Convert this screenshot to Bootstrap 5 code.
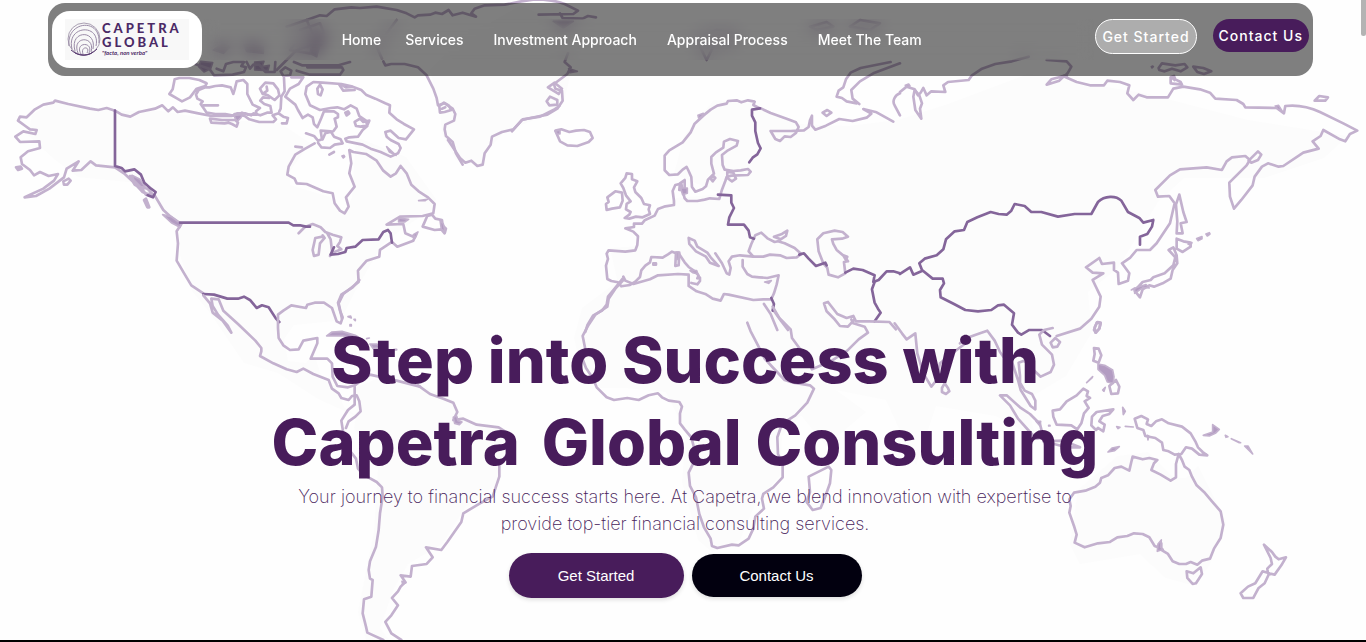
<!DOCTYPE html>
<html lang="en">
<head>
<meta charset="utf-8">
<meta name="viewport" content="width=device-width, initial-scale=1">
<title>Capetra Global Consulting</title>
<link href="https://cdn.jsdelivr.net/npm/bootstrap@5.3.0/dist/css/bootstrap.min.css" rel="stylesheet">
<style>
  :root { --brand: #481c5b; --ink: #02000f; }
  body { font-family: Inter, "Liberation Sans", sans-serif; background: #fefefe; }
  .hero { min-height: 100vh; border-bottom: 2px solid #000; overflow: hidden; }
  .world { z-index: 0; }
  .world g { fill: none; stroke: #c3b1ce; stroke-width: 8; stroke-linejoin: round; stroke-linecap: round; }
  .world .land { fill: #fcfcfc; stroke: none; }
  .world .edge { fill: none; stroke: #84659a; stroke-width: 8; }
  .world .blob { fill: #b39cc2; stroke-width: 5; }
  .topbar { z-index: 2; margin: 3px 53px 0 48px; padding: 8px 4px; background: rgba(0,0,0,.5); border-radius: 17px; }
  .brand-pill { width: 150px; height: 57px; border-radius: 18px; }
  .menu { height: 41px; padding-right: 34px; backdrop-filter: blur(8px); }
  .menu a { color: #fff; font-size: 14px; font-weight: 500; line-height: 20px; text-decoration: none; white-space: nowrap; }
  .menu .spaced { margin-left: 30px; }
  .pill { border-radius: 24px; color: #fff; font-size: 14px; font-weight: 500; line-height: 21px; letter-spacing: 1px; padding: 6px; white-space: nowrap; }
  .pill-ghost { background: #adadad; border: 1px solid #fff; }
  .pill-solid { background: var(--brand); border: 0; }
  .lede-wrap { z-index: 1; padding: 243px 12px 0 16px; }
  .headline { color: var(--brand); font-size: 63px; font-weight: 800; line-height: 82px; margin: 0; }
  .tagline { color: var(--brand); font-size: 18px; font-weight: 200; line-height: 27px; margin: 0 0 16px; max-width: 800px; }
  .cta { font-family: "Liberation Sans", Arial, sans-serif; font-size: 15px; line-height: 24px; color: #fff; border: 0; border-radius: 24px; box-shadow: 0 2px 4px rgba(0,0,0,.12); }
  .cta-main { background: var(--brand); width: 175px; height: 45px; }
  .cta-dark { background: var(--ink); width: 170px; height: 43px; }
  .thumb { z-index: 3; top: 0; right: 0; width: 5px; height: 36px; background: #b3b3b3; border-radius: 0 0 3px 3px; }
</style>
</head>
<body>
<div class="hero position-relative d-flex flex-column">

<svg class="world position-absolute top-0 start-0 w-100 h-100" viewBox="0 0 1366 642" preserveAspectRatio="xMidYMin slice" aria-hidden="true">
  <!-- Land masses -->
  <path class="land" d="M55 101l60 10 45 0 50 8 70 4 30 20-20 28 0 14 40 12 14 18 8-18 4-60 50 20 30 42-4 10-30 20-20 16-14 24-16 28-10 20-8 4-40 4-10 14 4 22 18 2 8-10 8 26 14 8 8 20 14 10-40-18-40-26-34-10-34-50-18-22-12-36 0-28-22-20-20-24-60-6-24-18-26-24 4-20z"/>
  <path class="land" d="M430 70l30-30 60-34 50 20 0 50-6 26-30 18-30 12-16 18-8 16-24-6-14-26-2-24z"/>
  <path class="land" d="M355 388l38-16 60 28 10 18 45 14-8 50-34 24-24 38-34 20-14 24-14 40 18 24h-28l-12-40 16-80 4-64-24-40 4-24z"/>
  <path class="land" d="M622 278l60-4 30 22 50 6 20 40 28 26 26 10-30 32-24 26-2 40-24 26-16 38-28 12-14-12-16-58 4-50-20-40-40-4-26 0-20-24-6-26 8-30z"/>
  <path class="land" d="M610 248l30-2 0-20 36-28 46-4-48-20 10-38 30-36 40 4 44 20 50 2 50-6 50-16 80-30 120 20 100 26 100 16-24 22-60 20-80 0-26 24-40 66-30 24 4 40-26 44-40 24 10 38-40-22-60-10-20 60-30-66-50-10 30 22-40 34-44-54-30-26-60-20-60 0z"/>
  <path class="land" d="M1078 490l40-34 30-4 26 26 12 0 12-12 28 56-18 46-20 16-22-6-26-24-60 10-10-20z"/>
  <!-- North America -->
  <g transform="translate(0 70) scale(.3333)">
    <path d="M345 122L320 114 295 120 270 116 205 102 165 92 160 98 130 104 105 118 80 142 60 140 54 152 76 168 90 178 110 180 106 192 70 184 46 200 60 216 118 214 120 234 84 244 62 262 66 282 90 300 102 316 120 306 146 318 174 312 162 332 130 356 74 382 108 378 148 356 192 322 200 296 236 274 218 302 244 300 272 274 288 286 345 292 372 310 400 336 428 366 448 374 464 376 490 420 512 440 544 462 530 484 534 520 530 572 556 616 574 646 610 670"/>
    <path d="M48 292l14-2 4 6-12 4zM190 334l16-8 6 6-10 12-10 0zM432 390l6-4 10 26-6 0zM390 318l12 4 12 26-10-4zM422 350l20 6 14 14-18 4z"/>
    <path class="blob" d="M396 316l24 12 16 24-14-2-20-20zM488 434l26 6 30 22-4 10-26-14z"/>
    <path d="M345 122l20 12 26 6 26-14 48-10 22-10 18 18 14-12 14 14 22-4 40 8 40 8 40 0 20 0 16-8 24 0 18 6 8-6 20 6 20-8 14 0-4-20-18-6-12-10 8-10 18 2"/>
    <path d="M630 146l4 12 40 2 12-2 10 4 14 8 4-12-8-8-40 0zM704 132l30 6 14 10 30 8 42 0 8-8-10-12 18-6 14 10 14 4-4 16-14 0"/>
    <path d="M944 220L912 238 886 254 866 290 862 314 884 326 890 340 920 342 970 364 998 370 1004 400 1020 422 1034 430 1046 410 1038 382 1064 350 1048 310 1054 280 1048 240 1060 246 1098 252 1130 272 1150 302 1172 320 1188 310 1202 288 1220 310 1234 344 1256 364 1284 382 1304 402 1300 430 1268 438 1200 440 1160 464 1210 462 1216 490 1240 500 1248 494 1240 512 1192 530 1176 516 1140 540 1138 560 1100 572 1074 602 1076 636 1030 672 1016 700 1026 746"/>
    <path d="M1282 438l-14 32 36 10 20-2 10 12 4-14-10-10-2-16-20-4-10-12z"/>
    <path class="blob" d="M1196 444l30 4-12 8-18 0zM1240 494l14-8-8 18zM1256 392l26-4-6 4z"/>
    <path d="M896 490l18-18 24-10 24 10 14 14 22 8 26 8-4 14-8 12 12 10-26 10-8 10M968 500l-22 4-8 36 4 18 14-4 4-34 14-16-6-8zM982 490l10 18 4 34"/>
    <path class="edge" d="M345 122v166l20 6 10 10 28-6 20 16 10 24 20 18 14 10-8 16-16-6M540 458h326l14 8 20 0 18 4 12 0M1002 532l-10 22 22-2 22-6 4-12 26-4 22-20 48-2 14-22 14-6 8 10 4 28M610 672l32 2 40 12 32 0 18-6 18 10 20 24 16-8 20 6 22 34 10 10"/>
  </g>
  <!-- Arctic islands -->
  <g transform="translate(150 50) scale(.3333)">
    <path d="M74 88l-6 30-10 14 24 14 14 8 24-12 20-26 26-8 4-8-22-10-30-6-30 0zM166 112l-20 8-8 14 4 12 16 8-6 8 10 14 8 12 26 4 30 0 30 6 20-10 18 6 26 0-2-10 12-10-22-10-16-32 0-30-12-12-20 4-6 24-4 14-8-20-26-6-20 2-18 4zM160 166h44M330 116l16-18 24 2 14 18 4 18-14 14-20-14-16-4zM350 110l2 12-12 8 10 4M402 84l2 40-10 16-2 36-4 8M424 82h36l-14 20-26 14-14 24 30 24 8 16 14 24 16-10 14 8 4 20 10 10 12-28 8-20 30 0 12 8 0 10-10 4 6 24-10 14-24 6-8 18"/>
    <path d="M510 180l-30-14-14-34 4-22 20-14 28 2 56 4 34 8 26 10 14 14 28 12 30 14 14 6-2 22 22 20 22 14 30 16-24 30-22-4-24-22-16 4 4 14 12 10 24 12 6 12-8 16-22 10-30-14-30-10-24-12-48-10-4-8 12-4 26-2 14-20 14-12-4-16-20-14-8-22-18-10-20 12-20-6-20 2zM614 216l16-10 10 10 18-4-6 14-20 4-14-2zM502 116l8-12 8 14-6 18-8-4zM586 188l8-4 4 6-8 6z"/>
    <path d="M468 250l24 8 12 14 12-4-4-26 30 2 10 16 20 8 6 12-24 4-14 10-26-2-10-14M436 290l20 2M538 314l14-8M568 104l12 18 34-2"/>
    <path class="blob" d="M568 102l40 10-20 2zM576 318l6-2 2 4-4 4zM710 290l28 26-20-10zM252 196l26-2-6 10-10 10-6-8zM152 34l36 4-6 18-20 10-16-16zM314 36l28-2-6 16 22-4-4 16-40-2z"/>
    <path d="M128 40l50 16 14 20 56-2 34-8 6-14-14-4 8-12-32 0-22 6-8 22-20-8M290 36l10 20 10-12 18 0 18 22 28 0 2-30M392 64l14-12 18 10-4 14-20 2zM432 36l24 10 110 0 34-10M440 62l40 12 90 0 10-14-4-8-104 0M700 34l6 12 18-4 40 0 40 10 26 24 20 40 10 28 4 22 20-6 24 16 8 16-4 20-26 12-2 14 4 20 20 18 10 34 20 34"/>
    <path d="M868 168l14-10 14 8 8 14-20 6-14 2zM876 176l10-4"/>
  </g>
  <!-- Far north behind the bar -->
  <g transform="translate(200 0) scale(.3333)">
    <path d="M320 60l40-14 20 2 24-20 50-6 26 2 50-4 60 10 30 10 24 12 10-6 36-2 16-6 20 4 20-12 12 16 30-8 40 12-14-10 10-14 30-10 60-2 50-10 40-6c40 0 70 6 90 14l40 20-14 10-104 2M1080 40l8 14 60 2 16-8 24 4M1104 160l-10 26 18 16-10 20-40 30 4 14 20 6 2 30-16 24-30 18-50 10-26 6-30 34"/>
    <path d="M590 60l-30 40-30 40 16 36M260 80l60-20 30 70-60 20-60 60M300 90l60-20 20 50-50 40-60-10 30-40M1044 262l20-14 22 18-10 16zM1040 304l10-14 22 10 0 14-24 2z"/>
    <path class="blob" d="M40 150l30-20 20 10-20 20zM130 130l60 10 0 20-50-6zM340 110l30-10-20 70-20-10zM1060 64l60 0-30 20zM1106 206l26 8-22 4z"/>
  </g>
  <!-- Greenland south, Iceland, Europe -->
  <g transform="translate(440 0) scale(.3333)">
    <path d="M24 420L40 444 60 474 76 488 94 482 112 498 128 494 134 460 152 434 156 410 186 396 220 388 248 358 300 350 340 330 358 318"/>
    <path d="M346 392l18-4 24 8 20-4 24-2 18 6 8 18-12 12-34 12-30-2-22-12z"/>
    <path class="blob" d="M346 394l14-4 0 12-8 0zM0 660l10 12 6 24-12-8zM774 346l16-6-4 10-10 4z"/>
    <path d="M560 520l16 2 0 16 16 6-10 18 4 14 18 18 8 18 18 4-4 12 4 14-22 10-20-2-20 6-14-2 14-10 4-8-14-8 2-16 12-8-14-18-8-22-8-14 14-16zM526 574l20 4 2 24-8 20-24 4-16 4-2-18 8-6-4-14z"/>
    <path d="M960 325l-20-10 4-10-20-4-20 6-14-6-26 2-4 8-28 6-20 12-22 18-26 24-12 26-24 30-40 24-14 16 0 44 14 14 26-2 14-14 12-8 6 12 8 18 2 30 10 14 22-8 10-8 6-20 18-18-8-30 0-20 14-14 22-14 2-18 18-8 24 6-4 14-26 14-18 14 2 30 6 14 26 4 22-2 22-4 8 8-8 10-50 2-14 4-4 12-10 26-8 28-28-2-16 4-22 4-30 0-8-8-6-24-4-20-18 4-8 18 4 30 0 12-26 4-22 8-10 20-30 14-8 10-24 0 0 10-26 4 24 10 14 14-2 26-6 16-30 4-50-4-6 10 4 16-6 20 4 40 12 6 20 4 10 12 26-4 16-10 14-14 4-20 12-14 14-10 4-16 34 2 16-10 12-8 22 8 16 24 12 14 20 14 10 12-4 8 8-2 0 10-8 10-18-4"/>
    <path d="M812 536l8-8 6 6-8 10zM862 516l18 2 8 18-12 8-14-10zM640 790h8v4h-8zM708 758h10l-2 38-10 2zM720 550l14-10 0 30-16 0z"/>
    <path class="blob" d="M710 756h6v22h-6zM722 564l20 0 0 16-14 4zM750 812l20 0 4 10-16-4zM974 846l20-4-8 8z"/>
    <path d="M834 796l-22-24-10-14-30-18-8-18-18-8 2 18 20 22 30 16 12 18 26 10M826 760l20 30 14 30 8 4 4-20-6-20 10-14 24-4 40 4M908 780l0 20 14 22 14 8 22 2 24 2 34-8-6 28-8 26-8 18-24 0-30 2-74-16-14-2-10 20-24-6-22-14-26-8-24-16 0-34-32-2-60 4-24 12-50 14-24-10-6-12"/>
    <path d="M940 770l30 0 20-6 30 2 20 8 30-2 14-10-20-18-30-14-20-6-10 2-20-10-20-18-18 8-12 26-8 22zM1002 710l24-8 16-10-4 16-16 10zM1150 790l-14-36-4-36 18-18 34-8 24 4 16 14-18 6-30 2 4 14 10 18 24 20 10 14-12 2 4 34-22 12-28-8-4-20zM1210 766l12 4-4 10z"/>
    <path d="M548 836l-24 30-20 24-4 24-14 18-26 14-18 30-6 20M972 912l20 30 20 48M1000 930l24 34 20 26"/>
    <path d="M962 325l30 14 50 18 26 10 8 14-8 18-16 12-18-2-14 14-14-6-14-24 60 0 40-2 14-10 4-20 6-14 0 30 10 12 32-12 40-20 40 6 42-10 14-12-24-14 40 10 50 28M1148 338l14-8 12 8-14 10zM1250 310l-30-6-14-10-16-4 6-18 14-10 8-24 14-20 30-14 90-18M1380 190l-80 30-40 24-26 26 4 26 20 16M1380 280c-16 6-24 24-16 36l16 30"/>
    <path d="M1110 80l50-14 20 14-50 10zM1230 80l30-20 60 10-30 20zM770 110l60-20 60 10-20 40-40-20-30 60-20-40z"/>
    <path class="edge" d="M960 325l-24 4 0 18 10 20 0 26 8 36 8 16-10 18-14 10-10 14M834 584l40 2 0 22 8 16-14 28-4 22 48 0 14 18 4 20 12 4M1078 764l14-4 14 16 22 22 28-10 4 8M1216 818l24-12 28 4 36 16-4 20 16-6 24-26 20 0 20 6M1304 846l-8 22 8 40 10 18 8 12-18 26"/>
    <path class="edge" d="M994 894l8 18-4 20"/>
    <path d="M1244 958l-20 22-24-2-16-20-24-24-8-24 12-4 28 36 28 12 20-6 8 16 40 0 60 2 20 22"/>
  </g>
  <!-- Russia, China, Japan -->
  <g transform="translate(900 60) scale(.3333)">
    <path d="M0 96l20-16 24 8 10 18 8-8 8-14 10 22 14-12 42 2-6-20 14-10 62-6 10-14 30-20 40-14 50-8 50-14M440 0L500 4 514 20 504 38 494 50 530 66 570 76 612 76 622 62 660 66 688 76 682 100 700 120 716 104 740 112 804 112 820 86 850 80 900 88 930 98 946 116 1010 120 1030 132 1036 142 1130 144 1152 160 1156 138C1190 134 1230 142 1260 156L1330 190 1372 212 1350 222 1336 244 1320 238 1270 210 1262 228 1238 244 1256 266 1210 278 1150 318 1136 320 1104 310 1086 320 1064 350 1058 376 1024 420 1002 446 990 410 988 368 1040 316 1050 300 1036 288 996 292 980 304 966 330 920 322 840 328 810 346 766 390 774 410 808 408 824 430 810 490 770 550 750 570 710 570 690 594 666 610 688 640 684 662 656 672 654 638 642 630 642 608 606 612 598 594 558 622 578 638 610 640 578 660 602 710 598 740 574 776 540 806 470 828"/>
    <path d="M1046 302l28-28 10 10-10 16-20 8zM1244 122l14-14 26 4-8 10zM44 90l-4 20 6 40 18 26-4-30 6-16-8-24zM440 74l14-16 38-10-14 14zM812 52l10-4 4 10 16 8 4 8-34-4zM776 24l10-14 40 6 28-4 8 10-20 12-26-8-22 8-16-4zM880 20l30 4 24 10-22 8-20-6z"/>
    <path class="blob" d="M754 20l4-2 2 2-4 4zM1126 138l10-2 10 16-12-4zM16 76l10-4 4 6-12 2zM484 48l18-6 0 8-14 2zM812 52l10 0 2 10zM890 536l16-6 0 6-12 6zM918 522l10-4 2 4-8 6zM864 552l12-4-4 8z"/>
    <path d="M838 404l-10 30 4 50-2 36 18 0-6-30 18-4-10-30zM830 536l20 8 22 4 0 12-24 16-18-10zM806 570l14-8 10 24 2 24-14 20-6 26-24 14-26 10-14-4-20 12-8 24-16-20 24-26 24-6 8-8 34-12 26-24 6-24zM584 802l8-16 10 2-4 18-12 12z"/>
    <path class="blob" d="M694 690l10-6 0 16 26-18 18 2-10-10-26 8z"/>
    <path class="edge" d="M0 642l30-20 10 22 24-10M66 630l-8-20 16-14 36-10 20-18 8-30 26-24 28-4 10-24 30-14 40-16 24 6 24 2 14-12 10-20 30 6 20 18 30 0 50 14 50-8 50 0 20-36c20-20 54-20 70-4l20 34 34 18 12 14 30-8-4 20-14 22-22 8 0 24M66 630l32 26 30 0 4 14-12 20 2 22 40 20 34 18 38 4 40-4 20-14 18-2 30 26-6 34 18 24 10 6 24-14 38 0 24 18"/>
  </g>
  <!-- Central America -->
  <g transform="translate(190 280) scale(.3333)">
    <path d="M508 0L488 22 454 44 444 68 450 92 458 112 452 130 440 124 426 84 402 68 374 68 352 74 348 84 304 76 280 92 264 104 264 144 266 174 280 196 300 210 326 208 340 182 382 174 382 190 362 236 412 236 426 250 428 290 442 318 474 322 494 316 540 284 620 302 690 320"/>
    <path d="M40 46l20 24 8 28 30 24 26 36-10-20-30-34-16-26-4-22 22 2 14 34 44 40 52 50 18 22 0 10-4 14 40 22 40 18 30 8 20-10 30 16 46 18 10 26 20 14 8 14 22 6 10-12 14-2 8 18 4 30-16 16-20 14-8 20"/>
    <path class="blob" d="M410 168l16-12 30-2 40 12 26 16-36-4-26-10zM474 110l8-2 2 6zM492 118h4v4zM480 134h4v4h-4zM540 192l20 0 14 10-24 4zM612 208h8v2h-8zM530 176l8-2z"/>
  </g>
  <!-- South America -->
  <g transform="translate(330 370) scale(.3333)">
    <path d="M74 50L74 104 54 120 34 152 40 190 30 200 50 230 78 266 84 296 100 314 140 336 156 352 158 380 150 430 146 480 138 530 120 574 116 600 120 626 128 630 124 680 102 688 98 730 108 770 112 788 160 810M214 810L184 790 166 756 184 736 204 706 186 684 204 664 212 650 226 636 212 616 242 620 246 588 290 582 308 562 288 532 334 540 352 516 394 456 400 430 450 400 488 380 508 320 508 284 544 236 550 200 506 172 440 164 400 146 370 150 382 126 370 98 340 86 300 72 264 46"/>
    <path class="blob" d="M370 142l10-4 4 14 12 4-8 8-14-4zM216 634l12 4-10 4z"/>
  </g>
  <!-- Africa, Arabia and India -->
  <g transform="translate(560 240) scale(.3333)">
    <path d="M190 120l-24 26-20 30-4 24-36 24-20 30-18 34 8 40-8 30 10 26 20 30 12 28 30 30 22 8 40-6 34 6 30-14 28-6 12 12 20 10 32 4 8 14-6 20 0 30 14 18 20 24 8 30 6 32-22 44 4 40 18 34 10 50 14 40 20 34 4 22 16 6 44-10 20 2 30-20 14-30 6-36 26-24-6-30 4-14 30-20 28-30 0-40-14-30-2-50 14-40 40-26 36-38 20-42-12-10-50-8-26-8-34-36-26-28-20-40-22-42-10-26"/>
    <path d="M638 200l20 34 34 34 4 26 44 60 16 34 56-24 50-32 34-34 28-20-10-18-34-10-6-12M1004 250L1026 280 1040 298 1066 280 1072 340 1090 400 1114 440 1130 420 1140 370 1190 330 1230 300"/>
    <path d="M1146 444l8-14 10 14 4 10-10 8-12-6zM746 710l60-30 8 10-4 40-18 50-10 24-24 6-18-24 10-30-2-24z"/>
  </g>
  <!-- South-east Asia and Oceania -->
  <g transform="translate(960 300) scale(.3333)">
    <path d="M0 130l20-16 40-14 22-8 22 30 16 34 10 14 24 10 20 60 8 30 30 48 14 10 0-26-10-20-22-10-14-24 0-20-4-40 16-6 20 20 30 28 30-14 10-22-6-30-30-30-8-30 14-14 26-6M272 128l14-14 14 12-8 14-14 2zM402 90l8-22 12 2-4 16-10 12z"/>
    <path d="M120 286l20 0 40 36 30 20 30 30 10 40-20 4-20-20-36-40-24-40zM278 332l22-4 20-24 30-18 20-20 14 8-4 14 10 6-16 10 12 20-14 16-8 30-12 18-18-12-44-2-10-24zM250 424l60-2 50 20-40 0zM402 144l14 2 8 20-8 22-16-6 4-20zM448 258l20-18 10 20-4 20-20 2z"/>
    <path class="blob" d="M414 192l20 4 24 14 4 20-2 20-18-4-8-20-20-18zM380 248l18-18-2 4zM428 270l8-8-4 12zM488 322l8 12-6 10zM470 380l10 2-6 4zM496 379l24 2zM562 406l4 2-2 12zM444 456l12-12 22-4-14 12zM796 406l8 4-6 2zM814 416l28 12-4 0zM854 438l10 0 14 24-22-22zM758 374l20 14-12 12-18 8-18-2 28-10zM228 364l14 0-2 14zM266 376h4v2h-4z"/>
    <path d="M396 350l14-14 50-8-12 14-20 6-10 16 16 10-4 20-16-10-6 6-14-14zM524 356l20-8 20 10-4 14 14 6 14-14 18-6 20 12 40 10 26 20 14 24 8 18 14 14 14 10-24-2-22-18-18-4-14 20-20 2-18-10-16-4-4-22-20-14-30-6-6-18-18-6z"/>
    <path d="M656 462l-8 30 0 40-16 10-30-18-28-14 8-20 10-10-24-6-20 4-30-8-4 16-6 26-24-12-20 4-20 22-20 8-4 14-14 12-30 12-34 6-14 20 4 20-4 20 14 40 8 26-6 24 30 14 40-12 36-4 22-14 30-4 20-8 26 2 20 10 16 26 10 4 10-12 0 20 20 12 14 22 20 8 20 0 14-6 20 8 14-12 24-6 12-30 20-32 8-40-8-40-26-30-24-28-22-20-14-26-8-20-14-10-8-20zM680 814l20 6 22-18 4 20-18 28-10 2-16-18z"/>
    <path class="blob" d="M594 732l10-12-2 22 8 6-18 6z"/>
    <path d="M912 734l24 22 10 14 10 8 22-6-14 24-20 28-20-4-2-14 14-14-4-18zM908 814l20 6-14 30-18 14-16 30-30 0-8-14 22-20 22-10z"/>
  </g>
</svg>

<header class="topbar navbar navbar-expand flex-nowrap position-relative">
  <a class="brand-pill bg-white d-flex align-items-center justify-content-center flex-shrink-0" href="#" aria-label="Capetra Global home">
    <svg width="124" height="41" viewBox="0 0 124 41">
      <rect width="124" height="41" fill="#f8f8f8"/>
      <g fill="none" stroke="#9a8ba7" stroke-width="1">
        <circle cx="19" cy="20" r="16" stroke="#aaa0b3"/>
        <path d="M4 27c-3-25 32-29 30-3M7 30C1 6 36 4 31 27M10 32C4 11 32 10 28 30M13 34c-7-17 18-18 13-1M16 35c-7-12 13-13 8-1M18 35c-3-8 8-8 4-1"/>
        <path d="M6 31c8 7 18 7 26-1M10 34c6 3 13 3 18-1" stroke="#5a3b72"/>
      </g>
      <g fill="#4b2a66" font-family="Lato, sans-serif" font-weight="900">
        <text x="37" y="14" font-size="13" letter-spacing="3">CAPETRA</text>
        <text x="37" y="28" font-size="13" letter-spacing="3">GLOBAL</text>
        <text x="37" y="36" font-size="6" font-style="italic" font-weight="700">"facta, non verba"</text>
      </g>
    </svg>
  </a>
  <nav class="menu flex-grow-1 d-flex align-items-center justify-content-center" aria-label="Main">
    <a class="me-4" href="#">Home</a>
    <a href="#">Services</a>
    <a class="spaced" href="#">Investment Approach</a>
    <a class="spaced" href="#">Appraisal Process</a>
    <a class="spaced" href="#">Meet The Team</a>
  </nav>
  <div class="d-flex gap-3 align-items-start align-self-start mt-2">
    <button type="button" class="pill pill-ghost">Get Started</button>
    <button type="button" class="pill pill-solid">Contact Us</button>
  </div>
</header>

<main class="lede-wrap position-relative text-center">
  <h1 class="headline">Step into Success with<br>Capetra <span class="ms-2">Global Consulting</span></h1>
  <p class="tagline mx-auto">Your journey to financial success starts here. At Capetra, we blend innovation with expertise to provide top-tier financial consulting services.</p>
  <div class="d-flex gap-2 justify-content-center align-items-center">
    <button type="button" class="cta cta-main">Get Started</button>
    <button type="button" class="cta cta-dark">Contact Us</button>
  </div>
</main>
<div class="thumb position-absolute" aria-hidden="true"></div>
</div>
<script src="https://cdn.jsdelivr.net/npm/bootstrap@5.3.0/dist/js/bootstrap.bundle.min.js"></script>
</body>
</html>
